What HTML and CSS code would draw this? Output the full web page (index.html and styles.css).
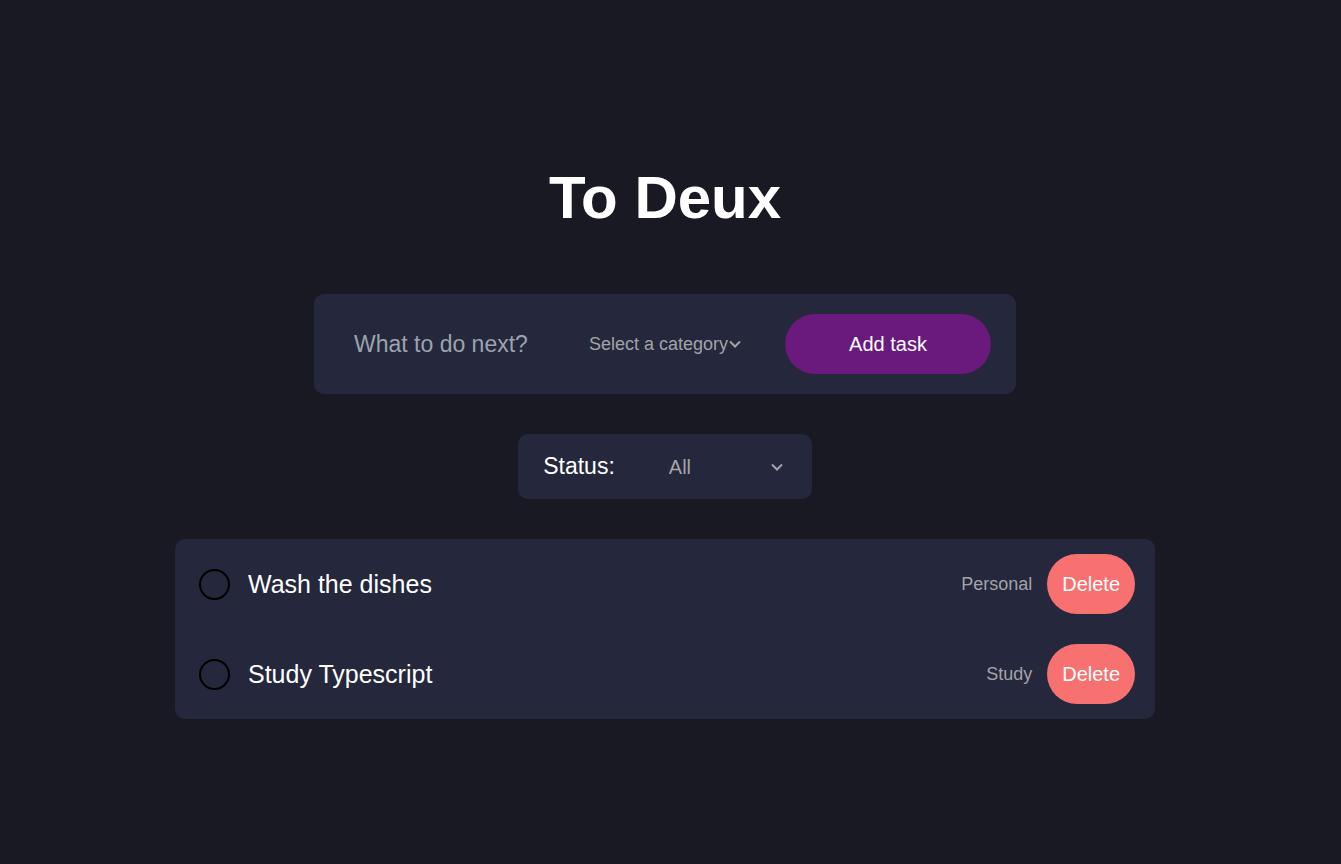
FILE: index.html
```html
<!DOCTYPE html>
<html lang="en">
<head>
  <meta charset="utf-8">
  <meta name="viewport" content="width=device-width, initial-scale=1">
  <title>To Deux</title>
  <link rel="stylesheet" href="styles.css">
</head>
<body>
  <main class="app">
    <h1 class="title">To Deux</h1>
    <form class="panel task-form">
      <input class="task-input" type="text" placeholder="What to do next?" aria-label="What to do next?">
      <div class="picker category-picker">
        <select class="picker-select category-select" aria-label="Category">
          <option>Select a category</option>
          <option>Personal</option>
          <option>Study</option>
        </select>
        <svg class="chevron" viewBox="0 0 12 8" aria-hidden="true"><path d="M1 1.500 6 6.500l5-5"/></svg>
      </div>
      <button class="button add-button" type="button">Add task</button>
    </form>
    <div class="panel filter">
      <label class="filter-label" for="status">Status:</label>
      <div class="picker status-picker">
        <select class="picker-select status-select" id="status">
          <option>All</option>
          <option>Active</option>
          <option>Completed</option>
        </select>
        <svg class="chevron" viewBox="0 0 12 8" aria-hidden="true"><path d="M1 1.500 6 6.500l5-5"/></svg>
      </div>
    </div>
    <ul class="panel task-list">
      <li class="task">
        <input class="task-check" type="checkbox" id="task-1">
        <label class="task-name" for="task-1">Wash the dishes</label>
        <span class="task-category">Personal</span>
        <button class="button delete-button" type="button">Delete</button>
      </li>
      <li class="task">
        <input class="task-check" type="checkbox" id="task-2">
        <label class="task-name" for="task-2">Study Typescript</label>
        <span class="task-category">Study</span>
        <button class="button delete-button" type="button">Delete</button>
      </li>
    </ul>
  </main>
</body>
</html>
```

FILE: styles.css
```css
* {
  box-sizing: border-box;
}

body {
  margin: 0;
  background: #191924;
  color: #fff;
  font-family: "Liberation Sans", Arial, sans-serif;
}

input,
select,
button {
  font-family: inherit;
}

.app {
  display: flex;
  flex-direction: column;
  align-items: center;
  justify-content: center;
  gap: 40px;
  min-height: 100vh;
  padding-right: 11px;
}

.title {
  margin: 0;
  padding: 18px 0 22px;
  font-size: 60px;
  line-height: 69px;
}

.panel {
  background: #25273c;
  border-radius: 10px;
}

.button {
  height: 60px;
  border: 0;
  border-radius: 30px;
  color: #fff;
  font-size: 20px;
  cursor: pointer;
}

.task-form {
  display: flex;
  align-items: center;
  width: 100%;
  max-width: 702px;
  padding: 20px 25px 20px 40px;
}

.task-input {
  flex: 1;
  min-width: 0;
  padding: 0;
  border: 0;
  outline: 0;
  background: transparent;
  color: #fff;
  font-size: 23px;
}

.task-input::placeholder {
  color: #9ca3af;
}

.picker {
  display: grid;
  align-items: center;
}

.picker-select {
  grid-area: 1 / 1;
  width: 100%;
  padding: 0;
  border: 0;
  appearance: none;
  background: transparent;
  color: #a3a3a8;
}

.chevron {
  grid-area: 1 / 1;
  justify-self: end;
  width: 12px;
  height: 8px;
  fill: none;
  stroke: #a3a3a8;
  stroke-width: 2;
  pointer-events: none;
}

.category-picker {
  width: 152px;
  margin-right: 44px;
}

.category-select {
  font-size: 18px;
}

.add-button {
  width: 206px;
  background: #6a197d;
}

.filter {
  display: flex;
  align-items: center;
  gap: 54px;
  height: 65px;
  padding: 0 29px 0 25px;
}

.filter-label {
  font-size: 23px;
}

.status-picker {
  width: 114px;
}

.status-select {
  font-size: 20px;
}

.task-list {
  width: 100%;
  max-width: 980px;
  margin: 0;
  padding: 0;
  list-style: none;
}

.task {
  display: flex;
  align-items: center;
  padding: 15px 20px 15px 24px;
}

.task-check {
  width: 31px;
  height: 31px;
  margin: 0 18px 0 0;
  border: 2px solid #000;
  border-radius: 50%;
  appearance: none;
}

.task-check:checked {
  background: #6a197d;
}

.task-name {
  flex: 1;
  font-size: 25px;
}

.task-category {
  margin-right: 15px;
  color: #a3a3a8;
  font-size: 18px;
}

.delete-button {
  padding: 0 15px;
  background: #f87171;
}
```
